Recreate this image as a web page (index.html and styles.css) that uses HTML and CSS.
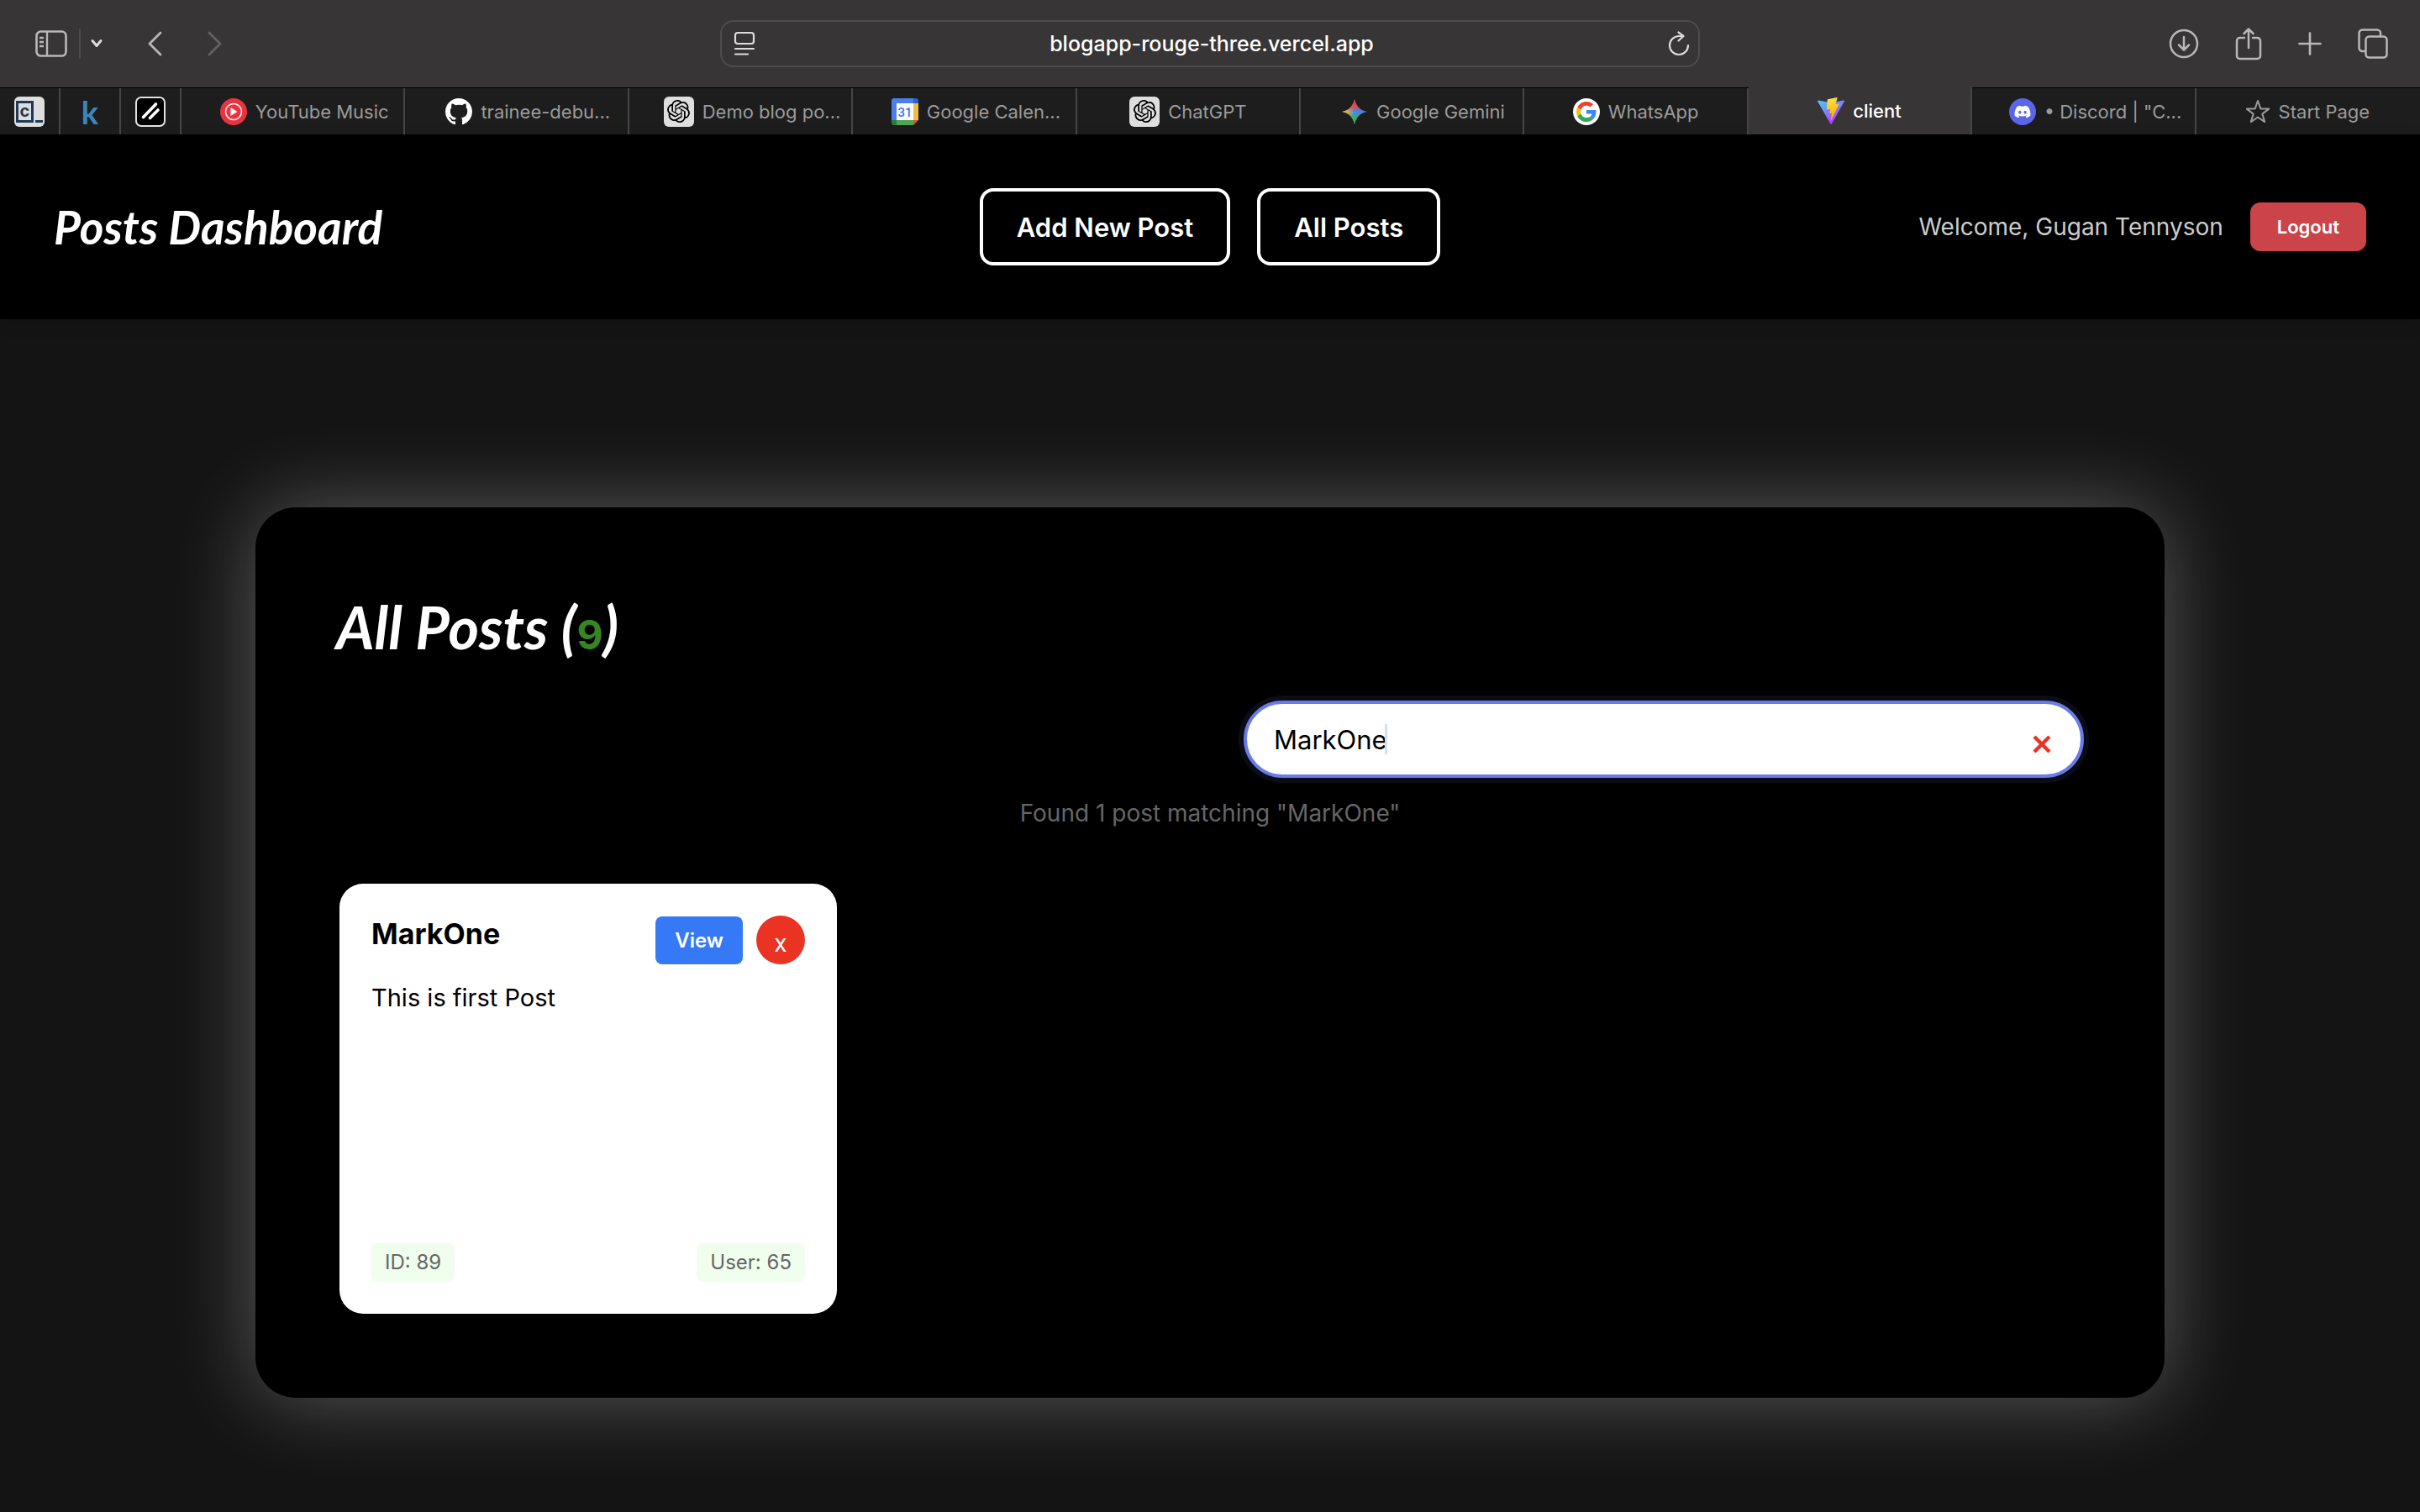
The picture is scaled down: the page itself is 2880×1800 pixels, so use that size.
FILE: index.html
```html
<!DOCTYPE html>
<html lang="en">
<head>
<meta charset="utf-8">
<meta name="viewport" content="width=device-width, initial-scale=1">
<title>client</title>
<link rel="stylesheet" href="styles.css">
</head>
<body>
<svg class="defs" aria-hidden="true">
  <defs>
    <linearGradient id="viteBlue" x1="0" y1="0" x2="0.6" y2="1"><stop offset="0" stop-color="#41d1ff"/><stop offset="1" stop-color="#bd34fe"/></linearGradient>
    <linearGradient id="viteGold" x1="0.4" y1="0" x2="0.6" y2="1"><stop offset="0" stop-color="#ffea83"/><stop offset="0.1" stop-color="#ffdd35"/><stop offset="1" stop-color="#ffa800"/></linearGradient>
    <linearGradient id="gemRed" x1="0.5" y1="0" x2="0.5" y2="0.5"><stop offset="0" stop-color="#f0443c"/><stop offset="0.5" stop-color="#f0443c"/><stop offset="1" stop-color="#f0443c" stop-opacity="0"/></linearGradient>
    <linearGradient id="gemGreen" x1="0.5" y1="1" x2="0.5" y2="0.5"><stop offset="0" stop-color="#34b354"/><stop offset="0.4" stop-color="#34b354"/><stop offset="1" stop-color="#34b354" stop-opacity="0"/></linearGradient>
    <linearGradient id="gemGold" x1="0" y1="0.5" x2="0.5" y2="0.5"><stop offset="0" stop-color="#fbc02d"/><stop offset="0.4" stop-color="#e8b53a"/><stop offset="1" stop-color="#fbc02d" stop-opacity="0"/></linearGradient>
    <symbol id="openai" viewBox="0 0 24 24"><path d="M22.2819 9.8211a5.9847 5.9847 0 0 0-.5157-4.9108 6.0462 6.0462 0 0 0-6.5098-2.9A6.0651 6.0651 0 0 0 4.9807 4.1818a5.9847 5.9847 0 0 0-3.9977 2.9 6.0462 6.0462 0 0 0 .7427 7.0966 5.98 5.98 0 0 0 .511 4.9107 6.051 6.051 0 0 0 6.5146 2.9001A5.9847 5.9847 0 0 0 13.2599 24a6.0557 6.0557 0 0 0 5.7718-4.2058 5.9894 5.9894 0 0 0 3.9977-2.9001 6.0557 6.0557 0 0 0-.7475-7.0729zm-9.022 12.6081a4.4755 4.4755 0 0 1-2.8764-1.0408l.1419-.0804 4.7783-2.7582a.7948.7948 0 0 0 .3927-.6813v-6.7369l2.02 1.1686a.071.071 0 0 1 .038.052v5.5826a4.504 4.504 0 0 1-4.4945 4.4944zm-9.6607-4.1254a4.4708 4.4708 0 0 1-.5346-3.0137l.142.0852 4.783 2.7582a.7712.7712 0 0 0 .7806 0l5.8428-3.3685v2.3324a.0804.0804 0 0 1-.0332.0615L9.74 19.9502a4.4992 4.4992 0 0 1-6.1408-1.6464zM2.3408 7.8956a4.485 4.485 0 0 1 2.3655-1.9728V11.6a.7664.7664 0 0 0 .3879.6765l5.8144 3.3543-2.0201 1.1685a.0757.0757 0 0 1-.071 0l-4.8303-2.7865A4.504 4.504 0 0 1 2.3408 7.872zm16.5963 3.8558L13.1038 8.364 15.1192 7.2a.0757.0757 0 0 1 .071 0l4.8303 2.7913a4.4944 4.4944 0 0 1-.6765 8.1042v-5.6772a.79.79 0 0 0-.407-.667zm2.0107-3.0231l-.142-.0852-4.7735-2.7818a.7759.7759 0 0 0-.7854 0L9.409 9.2297V6.8974a.0662.0662 0 0 1 .0284-.0615l4.8303-2.7866a4.4992 4.4992 0 0 1 6.6802 4.66zM8.3065 12.863l-2.02-1.1638a.0804.0804 0 0 1-.038-.0567V6.0742a4.4992 4.4992 0 0 1 7.3757-3.4537l-.142.0805L8.704 5.459a.7948.7948 0 0 0-.3927.6813zm1.0976-2.3654l2.602-1.4998 2.6069 1.4998v2.9994l-2.5974 1.4997-2.6067-1.4997Z"/></symbol>
  </defs>
</svg>

<div class="toolbar">
  <div class="tools">
    <button class="tool" aria-label="Sidebar"><svg width="38" height="32" viewBox="0 0 38 32" fill="none" stroke="#b9b8b8" stroke-width="2.6"><rect x="1.5" y="1.5" width="35" height="29" rx="5"/><path d="M14 2v28M5 9h5M5 14h5M5 19h5" stroke-width="2.4"/></svg></button>
    <span class="rule"></span>
    <button class="tool tool-menu" aria-label="Tab groups"><svg width="16" height="12" viewBox="0 0 16 12" fill="none" stroke="#dddcdc" stroke-width="3" stroke-linecap="round" stroke-linejoin="round"><path d="M3 2.5 8 8.500l5-6"/></svg></button>
    <button class="tool tool-back" aria-label="Back"><svg width="18" height="30" viewBox="0 0 18 30" fill="none" stroke="#b9b8b8" stroke-width="2.8" stroke-linecap="round" stroke-linejoin="round"><path d="M16 2 3 15l13 13"/></svg></button>
    <button class="tool tool-forward" aria-label="Forward"><svg width="18" height="30" viewBox="0 0 18 30" fill="none" stroke="#636162" stroke-width="2.8" stroke-linecap="round" stroke-linejoin="round"><path d="m2 2 13 13L2 28"/></svg></button>
  </div>
  <div class="address">
    <svg width="26" height="30" viewBox="0 0 26 30" fill="none" stroke="#dddcdc" stroke-width="2.200" stroke-linecap="round"><rect x="2" y="2" width="22" height="13" rx="3"/><path d="M2 21h22M2 27.500h15"/></svg>
    <input class="url" type="text" value="blogapp-rouge-three.vercel.app" aria-label="Address">
    <button class="tool" aria-label="Reload"><svg width="26" height="30" viewBox="0 0 26 30" fill="none" stroke="#dddcdc" stroke-width="2.200" stroke-linecap="round" stroke-linejoin="round"><path d="M24 17A11 11 0 1 1 13 6h5M12.500 1.500 18.500 6l-6 5.500"/></svg></button>
  </div>
  <div class="tools tools-end">
    <button class="tool" aria-label="Downloads"><svg width="36" height="36" viewBox="0 0 36 36" fill="none" stroke="#b9b8b8" stroke-width="2.500" stroke-linecap="round" stroke-linejoin="round"><circle cx="18" cy="18" r="16"/><path d="M18 10v15M12 19.500l6 6 6-6"/></svg></button>
    <button class="tool" aria-label="Share"><svg width="32" height="40" viewBox="0 0 32 40" fill="none" stroke="#b9b8b8" stroke-width="2.500" stroke-linecap="round" stroke-linejoin="round"><path d="M11 13H5.500A3.500 3.500 0 0 0 2 16.500v18A3.500 3.500 0 0 0 5.500 38h21a3.500 3.500 0 0 0 3.500-3.500v-18a3.500 3.500 0 0 0-3.500-3.500H21M16 25V3M10.500 8 16 2.500 21.500 8"/></svg></button>
    <button class="tool" aria-label="New tab"><svg width="28" height="28" viewBox="0 0 28 28" fill="none" stroke="#b9b8b8" stroke-width="2.600" stroke-linecap="round"><path d="M14 1.500v25M1.500 14h25"/></svg></button>
    <button class="tool" aria-label="Tab overview"><svg width="36" height="36" viewBox="0 0 36 36" fill="none" stroke="#b9b8b8" stroke-width="2.500" stroke-linejoin="round"><rect x="9.500" y="9.500" width="25" height="25" rx="4"/><path d="M9 27H5.500A4 4 0 0 1 1.500 23V5.500a4 4 0 0 1 4-4H23a4 4 0 0 1 4 4V9"/></svg></button>
  </div>
</div>

<nav class="tabs" aria-label="Tabs">
  <a class="pin" href="#" aria-label="Codecademy"><span class="tile cc"><span class="cc-box">c</span><span class="cc-dash"></span></span></a>
  <a class="pin kaggle" href="#">k</a>
  <a class="pin" href="#" aria-label="Hashnode"><svg width="36" height="36" viewBox="0 0 36 36"><rect x="1" y="1" width="34" height="34" rx="6" fill="#000" stroke="#e2e2e2" stroke-width="2"/><path d="M9.500 24.500 24.500 9M17.500 25.500l9.500-9.500" stroke="#fff" stroke-width="3.600" stroke-linecap="round"/></svg></a>
  <a class="tab" href="#"><svg width="32" height="32" viewBox="0 0 32 32"><circle cx="16" cy="16" r="16" fill="#ea3340"/><circle cx="16" cy="16" r="9.500" fill="none" stroke="#fff" stroke-width="1.500"/><path d="m12.500 11 8 5-8 5z" fill="#fff"/></svg>YouTube Music</a>
  <a class="tab" href="#"><svg width="32" height="32" viewBox="0 0 16 16" fill="#fff"><path d="M8 0C3.580 0 0 3.580 0 8c0 3.540 2.290 6.530 5.470 7.590.4.070.55-.17.55-.38 0-.19-.01-.82-.01-1.490-2.010.37-2.530-.49-2.690-.94-.09-.23-.48-.94-.82-1.130-.28-.15-.68-.52-.01-.53.63-.01 1.080.58 1.230.82.72 1.210 1.870.87 2.330.66.07-.52.28-.87.51-1.070-1.780-.2-3.640-.89-3.640-3.950 0-.87.31-1.590.82-2.150-.08-.2-.36-1.020.08-2.120 0 0 .67-.21 2.200.82.64-.18 1.320-.27 2-.27s1.360.09 2 .27c1.530-1.040 2.200-.82 2.200-.82.44 1.100.16 1.920.08 2.120.51.56.82 1.270.82 2.150 0 3.070-1.870 3.750-3.650 3.950.29.25.54.73.54 1.480 0 1.070-.01 1.930-.01 2.200 0 .21.15.46.55.38A8.010 8.010 0 0 0 16 8c0-4.420-3.580-8-8-8z"/></svg>trainee-debu...</a>
  <a class="tab" href="#"><span class="tile"><svg width="27" height="27"><use href="#openai"/></svg></span>Demo blog po...</a>
  <a class="tab" href="#"><svg width="32" height="32" viewBox="0 0 32 32"><path d="M3 0h23v6H6v20H0V3a3 3 0 0 1 3-3z" fill="#4a80ec"/><path d="M26 0h3a3 3 0 0 1 3 3v3h-6z" fill="#2b62cc"/><path d="M26 6h6v20h-6z" fill="#f2bc42"/><path d="M6 26h20v6H6z" fill="#4fa456"/><path d="M0 26h6v6H3a3 3 0 0 1-3-3z" fill="#2f7b3c"/><path d="M26 26h6l-6 6z" fill="#de5144"/><path d="M6 6h20v20H6z" fill="#fff"/><text x="16" y="21.500" text-anchor="middle" font-family="Roboto, sans-serif" font-weight="500" font-size="15" fill="#3d74e8">31</text></svg>Google Calen...</a>
  <a class="tab" href="#"><span class="tile"><svg width="27" height="27"><use href="#openai"/></svg></span>ChatGPT</a>
  <a class="tab" href="#"><svg width="32" height="32" viewBox="0 0 32 32"><path fill="#4285f4" d="M16 1c1.500 8 6.500 13.500 15 15-8.500 1.500-13.500 7-15 15-1.500-8-6.500-13.500-15-15 8.500-1.500 13.500-7 15-15z"/><path fill="url(#gemGold)" d="M16 1c1.500 8 6.500 13.500 15 15-8.500 1.500-13.500 7-15 15-1.500-8-6.500-13.500-15-15 8.500-1.500 13.500-7 15-15z"/><path fill="url(#gemGreen)" d="M16 1c1.500 8 6.500 13.500 15 15-8.500 1.500-13.500 7-15 15-1.500-8-6.500-13.500-15-15 8.500-1.500 13.500-7 15-15z"/><path fill="url(#gemRed)" d="M16 1c1.500 8 6.500 13.500 15 15-8.500 1.500-13.500 7-15 15-1.500-8-6.500-13.500-15-15 8.500-1.500 13.500-7 15-15z"/></svg>Google Gemini</a>
  <a class="tab" href="#"><svg width="32" height="32" viewBox="0 0 64 64"><circle cx="32" cy="32" r="32" fill="#fff"/><g transform="translate(8 8)"><path fill="#ea4335" d="M24 9.500c3.540 0 6.710 1.220 9.210 3.600l6.850-6.850C35.900 2.380 30.470 0 24 0 14.620 0 6.510 5.380 2.560 13.220l7.980 6.190C12.430 13.720 17.740 9.500 24 9.500z"/><path fill="#4285f4" d="M46.980 24.550c0-1.570-.15-3.090-.38-4.550H24v9.020h12.940c-.58 2.960-2.260 5.480-4.780 7.180l7.730 6c4.510-4.180 7.090-10.360 7.090-17.650z"/><path fill="#fbbc05" d="M10.530 28.590A14.500 14.500 0 0 1 9.770 24c0-1.600.27-3.140.76-4.590l-7.980-6.190A23.990 23.990 0 0 0 0 24c0 3.880.92 7.540 2.560 10.780l7.970-6.190z"/><path fill="#34a853" d="M24 48c6.480 0 11.930-2.130 15.890-5.810l-7.730-6c-2.150 1.450-4.920 2.300-8.160 2.300-6.260 0-11.570-4.220-13.470-9.910l-7.980 6.190C6.510 42.620 14.620 48 24 48z"/></g></svg>WhatsApp</a>
  <a class="tab tab-active" href="#" aria-current="page"><svg width="32" height="32" viewBox="0 0 256 257"><path fill="url(#viteBlue)" d="M255.153 37.938 134.897 252.976c-2.483 4.440-8.862 4.466-11.382.048L.875 37.958c-2.746-4.814 1.371-10.646 6.827-9.670l120.385 21.517a6.537 6.537 0 0 0 2.322-.004l117.867-21.483c5.438-.991 9.574 4.796 6.877 9.620Z"/><path fill="url(#viteGold)" d="M185.432.063 96.440 17.501a3.268 3.268 0 0 0-2.634 3.014l-5.474 92.456a3.268 3.268 0 0 0 3.997 3.378l24.777-5.718c2.318-.535 4.413 1.507 3.936 3.838l-7.361 36.047c-.495 2.426 1.782 4.500 4.151 3.780l15.304-4.649c2.372-.72 4.652 1.360 4.150 3.788l-11.698 56.621c-.732 3.542 3.979 5.473 5.943 2.437l1.313-2.028 72.516-144.720c1.215-2.423-.88-5.186-3.540-4.672l-25.505 4.922c-2.396.462-4.435-1.770-3.759-4.114l16.646-57.705c.677-2.350-1.370-4.583-3.769-4.113Z"/></svg>client</a>
  <a class="tab" href="#"><svg width="32" height="32" viewBox="0 0 32 32"><circle cx="16" cy="16" r="16" fill="#5a65ea"/><path fill="#fff" transform="translate(6.500 6.500) scale(.79)" d="M20.317 4.370a19.791 19.791 0 0 0-4.885-1.515.074.074 0 0 0-.079.037c-.21.375-.444.864-.608 1.250a18.270 18.270 0 0 0-5.487 0 12.640 12.640 0 0 0-.617-1.250.077.077 0 0 0-.079-.037A19.736 19.736 0 0 0 3.677 4.370a.07.07 0 0 0-.032.027C.533 9.046-.32 13.580.099 18.057a.082.082 0 0 0 .031.057 19.900 19.900 0 0 0 5.993 3.030.078.078 0 0 0 .084-.028c.462-.63.874-1.295 1.226-1.994a.076.076 0 0 0-.041-.106 13.107 13.107 0 0 1-1.872-.892.077.077 0 0 1-.008-.128c.126-.094.252-.192.372-.291a.074.074 0 0 1 .077-.010c3.928 1.793 8.180 1.793 12.062 0a.074.074 0 0 1 .078.009c.12.099.246.198.373.292a.077.077 0 0 1-.006.127 12.299 12.299 0 0 1-1.873.892.077.077 0 0 0-.041.107c.36.698.772 1.362 1.225 1.993a.076.076 0 0 0 .084.028 19.839 19.839 0 0 0 6.002-3.030.077.077 0 0 0 .032-.054c.5-5.177-.838-9.674-3.549-13.660a.061.061 0 0 0-.031-.030zM8.020 15.331c-1.183 0-2.157-1.086-2.157-2.419s.955-2.419 2.157-2.419c1.210 0 2.176 1.095 2.157 2.419 0 1.333-.956 2.419-2.157 2.419zm7.975 0c-1.183 0-2.157-1.086-2.157-2.419s.955-2.419 2.157-2.419c1.210 0 2.176 1.095 2.157 2.419 0 1.333-.946 2.419-2.157 2.419z"/></svg>• Discord | "C...</a>
  <a class="tab" href="#"><svg width="30" height="30" viewBox="0 0 30 30" fill="none" stroke="#9b9b9b" stroke-width="2" stroke-linejoin="round"><path d="m15 2 3.300 9.400 9.900.2-7.900 6 2.900 9.500L15 21.500l-8.200 5.600 2.900-9.500-7.900-6 9.900-.2z"/></svg>Start Page</a>
</nav>

<header class="header">
  <h1 class="brand">Posts Dashboard</h1>
  <nav class="actions" aria-label="Posts">
    <button class="outline">Add New Post</button>
    <button class="outline">All Posts</button>
  </nav>
  <div class="account">
    <span class="welcome">Welcome, Gugan Tennyson</span>
    <button class="logout">Logout</button>
  </div>
</header>

<main class="page">
  <section class="panel">
    <h2 class="title">All Posts (<span class="count">9</span>)</h2>
    <div class="search">
      <input class="query" type="text" value="MarkOne" aria-label="Search posts">
      <span class="caret"></span>
      <button class="clear" aria-label="Clear search"><svg width="22" height="22" viewBox="0 0 22 22" stroke="#ea3323" stroke-width="4.500"><path d="m2 2 18 18M20 2 2 20"/></svg></button>
    </div>
    <p class="found">Found 1 post matching "MarkOne"</p>
    <div class="grid">
      <article class="card">
        <div class="card-head">
          <h3 class="card-title">MarkOne</h3>
          <div class="card-actions">
            <button class="view">View</button>
            <button class="delete">x</button>
          </div>
        </div>
        <p class="card-text">This is first Post</p>
        <div class="card-foot">
          <span class="badge">ID: 89</span>
          <span class="badge">User: 65</span>
        </div>
      </article>
    </div>
  </section>
</main>
</body>
</html>
```
FILE: styles.css
```css
* { box-sizing: border-box; }

body {
  margin: 0;
  min-height: 100vh;
  background: #141414;
  color: #fff;
  font-family: Inter, "Liberation Sans", sans-serif;
}

button, input { font-family: inherit; border: 0; margin: 0; padding: 0; background: none; color: inherit; }
h1, h2, h3, p { margin: 0; }
a { color: inherit; text-decoration: none; }
svg { display: block; flex: none; }
.defs { position: absolute; width: 0; height: 0; }

/* Browser toolbar */
.toolbar {
  display: grid;
  grid-template-columns: 1fr minmax(0, 1166px) 1fr;
  align-items: center;
  height: 104px;
  background: #373535;
}
.tools { display: flex; align-items: center; padding: 0 42px; }
.tools-end { justify-content: flex-end; gap: 43px; padding-right: 38px; }
.tool { display: flex; align-items: center; justify-content: center; }
.rule { width: 2px; height: 36px; margin-left: 14px; background: #4c4a4b; }
.tool-menu { margin-left: 11px; }
.tool-back { margin-left: 52px; }
.tool-forward { margin-left: 54px; }
.address {
  display: flex;
  align-items: center;
  height: 56px;
  padding: 0 10px 0 14px;
  border: 2px solid #4e4c4d;
  border-radius: 16px;
}
.url { flex: 1; min-width: 0; text-align: center; font-size: 25px; font-weight: 500; color: #fff; }

/* Tab strip */
.tabs { display: flex; height: 56px; background: #1d1d1d; border-top: 1px solid #000; }
.pin, .tab { display: flex; align-items: center; justify-content: center; border-right: 2px solid #464545; }
.pin { flex: none; width: 72px; }
.tab { flex: 1 1 0; min-width: 0; gap: 10px; white-space: nowrap; font-size: 22px; color: #9b9b9b; }
.tab::before, .tab::after { content: ""; flex: 1 0 0; min-width: 10px; }
.tab::before { min-width: 38px; }
.tab:last-child { border-right-color: transparent; }
.tab-active { margin-top: -1px; background: #373535; color: #fff; font-weight: 500; }
.tile { display: flex; align-items: center; justify-content: center; flex: none; width: 36px; height: 36px; border-radius: 6px; background: #dedede; color: #000; }
.cc { gap: 2px; align-items: flex-end; padding: 5px 1px; color: #1f3a56; }
.cc-box { width: 21px; height: 26px; border: 3px solid; font-size: 20px; line-height: 18px; font-weight: 700; text-align: center; }
.cc-dash { width: 9px; height: 3px; background: currentColor; }
.kaggle { font-family: Lato, sans-serif; font-size: 38px; line-height: 48px; font-weight: 700; color: #3a87be; }

/* App header */
.header {
  display: grid;
  grid-template-columns: 1fr auto 1fr;
  align-items: center;
  height: 220px;
  padding: 0 64px;
  background: #000;
  box-shadow: 0 4px 20px rgba(0, 0, 0, 0.1);
}
.brand, .title { font-family: Lato, "Open Sans", sans-serif; font-style: italic; font-weight: 700; }
.brand { font-size: 55px; line-height: 64px; }
.actions { display: flex; gap: 32px; }
.outline { height: 92px; padding: 0 40px; border: 4px solid #fff; border-radius: 16px; font-size: 31px; font-weight: 600; }
.account { display: flex; align-items: center; justify-content: flex-end; gap: 32px; }
.welcome { font-size: 28px; color: #ccc; }
.logout { height: 58px; padding: 0 32px; border-radius: 12px; background: #ca444a; font-size: 22px; font-weight: 600; }

/* Posts panel */
.page { padding: 224px 304px 136px; }
.panel {
  display: flex;
  flex-direction: column;
  padding: 96px 96px 100px;
  border-radius: 48px;
  background: #000;
  box-shadow: 0 0 100px rgba(255, 255, 255, 0.3);
}
.title { font-size: 70px; line-height: 92px; }
.count { font-family: Inter, sans-serif; font-style: normal; font-size: 48px; line-height: 1; color: #388522; }
.search { position: relative; align-self: flex-end; width: 1000px; max-width: 100%; margin-top: 42px; }
.query {
  display: block;
  width: 100%;
  height: 92px;
  padding: 0 96px 0 32px;
  border: 4px solid #6a7be6;
  border-radius: 46px;
  background: #fff;
  box-shadow: 0 0 0 6px rgba(102, 126, 234, 0.1);
  font-size: 31px;
  color: #000;
}
.caret { position: absolute; left: 168px; top: 28px; width: 3px; height: 36px; background: #cddffb; }
.clear { position: absolute; right: 39px; top: 41px; }
.found { margin-top: 24px; text-align: center; font-size: 28px; line-height: 36px; color: #666; }

.grid { display: grid; grid-template-columns: repeat(auto-fill, 592px); gap: 40px; margin-top: 66px; padding: 0 4px; }
.card { display: flex; flex-direction: column; min-height: 512px; padding: 38px; border-radius: 28px; background: #fff; color: #000; }
.card-head { display: flex; justify-content: space-between; }
.card-title { font-size: 34px; line-height: 44px; font-weight: 700; }
.card-actions { display: flex; align-items: center; gap: 16px; }
.view { height: 57px; padding: 0 23px; border-radius: 8px; background: #3579f6; color: #fff; font-size: 24px; font-weight: 600; }
.delete { width: 58px; height: 58px; border-radius: 50%; background: #ea3323; color: #fff; font-size: 28px; line-height: 58px; padding-top: 4px; }
.card-text { margin-top: 20px; font-size: 29px; line-height: 40px; }
.card-foot { display: flex; justify-content: space-between; margin-top: auto; }
.badge { padding: 0 16px; border-radius: 8px; background: #f0feee; font-size: 24px; line-height: 46px; color: #666; }
```
